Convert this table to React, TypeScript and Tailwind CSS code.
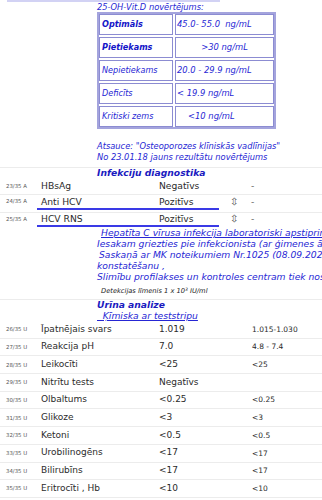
const blue = "text-[#2626d4]";

const vitD = [
  { name: "Optimāls", bold: true, value: "45.0- 55.0  ng/mL", align: "pl-[1px]" },
  { name: "Pietiekams", bold: true, value: ">30 ng/mL", align: "justify-center" },
  { name: "Nepietiekams", bold: false, value: "20.0 - 29.9 ng/mL", align: "pl-[1px]" },
  { name: "Deficīts", bold: false, value: "< 19.9 ng/mL", align: "pl-[1px]" },
  { name: "Kritiski zems", bold: false, value: "<10 ng/mL", align: "pl-[12px]" },
];

const urine = [
  { code: "26/35 U", name: "Īpatnējais svars", value: "1.019", ref: "1.015-1.030" },
  { code: "27/35 U", name: "Reakcija pH", value: "7.0", ref: "4.8 - 7.4" },
  { code: "28/35 U", name: "Leikocīti", value: "<25", ref: "<25" },
  { code: "29/35 U", name: "Nitrītu tests", value: "Negatīvs", ref: "" },
  { code: "30/35 U", name: "Olbaltums", value: "<0.25", ref: "<0.25" },
  { code: "31/35 U", name: "Glikoze", value: "<3", ref: "<3" },
  { code: "32/35 U", name: "Ketoni", value: "<0.5", ref: "<0.5" },
  { code: "33/35 U", name: "Urobilinogēns", value: "<17", ref: "<17" },
  { code: "34/35 U", name: "Bilirubīns", value: "<17", ref: "<17" },
  { code: "35/35 U", name: "Eritrocīti , Hb", value: "<10", ref: "<10" },
];

function Code({ text }: { text: string }) {
  return (
    <span className="w-[41px] shrink-0 pl-[6px] text-[5.4px] text-[#555]">{text}</span>
  );
}

export default function App() {
  return (
    <div className="w-[322px] h-[500px] overflow-hidden bg-white font-['DejaVu_Sans',sans-serif] text-[#2b2b2b] whitespace-nowrap">
      {/* tail of the block above */}
      <div className="ml-[7px] h-[2px] w-[213px] bg-[#d2d2f4]" />

      <div className={`ml-[97px] h-[10px] leading-[10px] text-[8.3px] italic ${blue}`}>
        25-OH-Vit.D novērtējums:
      </div>

      {/* vitamin D table */}
      <div className="ml-[97px] w-[179px] h-[117px] border-2 border-[#a4a4dd] grid grid-cols-[74px_99px] grid-rows-5 gap-[2px]">
        {vitD.map((r) => (
          <div key={r.name} className="contents">
            <div
              className={`border border-[#8c8cd2] pl-[2px] pt-[3px] text-[8.1px] leading-[12px] italic ${
                r.bold ? "font-bold text-[#1414c8]" : blue
              }`}
            >
              {r.name}
            </div>
            <div
              className={`flex border border-[#8c8cd2] pt-[3px] text-[8.4px] leading-[12px] italic ${blue} ${r.align}`}
            >
              <span className="whitespace-pre">{r.value}</span>
            </div>
          </div>
        ))}
      </div>

      <div className={`mt-[12px] ml-[97px] text-[8.3px] leading-[11px] italic ${blue}`}>
        <div>Atsauce: "Osteoporozes klīniskās vadlīnijas"</div>
        <div>No 23.01.18 jauns rezultātu novērtējums</div>
      </div>

      <div className="mt-[4px] h-px bg-[#ececec]" />

      <div className="ml-[97px] h-[10px] leading-[10px] text-[9.2px] font-bold italic text-[#1a1ac0]">
        Infekciju diagnostika
      </div>

      {/* infection rows */}
      <div className="flex h-[17px] items-center border-b border-[#ececec] text-[9.2px]">
        <Code text="23/35 A" />
        <span className="w-[118px] shrink-0">HBsAg</span>
        <span className="w-[71px] shrink-0">Negatīvs</span>
        <span className="w-[21px] shrink-0" />
        <span className="text-[#666]">-</span>
      </div>

      {[
        { code: "24/35 A", name: "Anti HCV", gap: "h-[3px] border-b border-[#ececec]", h: "h-[13px]" },
        { code: "25/35 A", name: "HCV RNS", gap: "", h: "h-[12px]" },
      ].map((r) => (
        <div key={r.code}>
          <div className={`flex ${r.h} items-center text-[9.2px]`}>
            <Code text={r.code} />
            <span className="w-[118px] shrink-0">{r.name}</span>
            <span className="w-[71px] shrink-0">Pozitīvs</span>
            <span className="w-[21px] shrink-0 text-[10px] leading-none text-[#555]">⇳</span>
            <span className="text-[#666]">-</span>
          </div>
          <div className="ml-[37px] h-[2px] w-[182px] bg-[#3a3ae6]" />
          {r.gap && <div className={r.gap} />}
        </div>
      ))}

      {/* comment */}
      <div className={`ml-[97px] text-[9.2px] leading-[11px] italic ${blue}`}>
        <div className="pl-[4px] underline">Hepatīta C vīrusa infekcija laboratoriski apstiprināta.</div>
        <div>Iesakam griezties pie infekcionista (ar ģimenes ārsta nosūtījumu).</div>
        <div className="pl-[2px]">Saskaņā ar MK noteikumiem Nr.1025 (08.09.2020) par infekcijas slimības</div>
        <div>konstatēšanu ,</div>
        <div>Slimību profilakses un kontroles centram tiek nosūtīts ziņojums.</div>
      </div>
      <div className="mt-[3px] ml-[101px] h-[12px] leading-[12px] text-[6.7px] italic text-[#222]">
        Detekcijas līmenis 1 x 10<sup className="text-[4.5px]">3</sup> IU/ml
      </div>

      <div className="mt-[2px] h-px bg-[#ececec]" />

      <div className="ml-[97px] h-[10px] leading-[10px] text-[9.2px] font-bold italic text-[#1a1ac0]">
        Urīna analize
      </div>
      <div className={`ml-[97px] h-[11px] leading-[11px] text-[9.2px] italic underline ${blue}`}>
        {"\u00a0\u00a0Ķīmiska ar teststripu"}
      </div>

      {urine.map((r) => (
        <div key={r.code} className="flex h-[17.7px] items-center border-b border-[#ececec] text-[9px]">
          <Code text={r.code} />
          <span className="w-[118px] shrink-0">{r.name}</span>
          <span className="w-[93px] shrink-0">{r.value}</span>
          <span className="text-[7.5px]">{r.ref}</span>
        </div>
      ))}

      <div className="ml-[97px] text-[9px] font-bold italic text-[#1a1ac0] underline">Mikroskopija</div>
    </div>
  );
}
